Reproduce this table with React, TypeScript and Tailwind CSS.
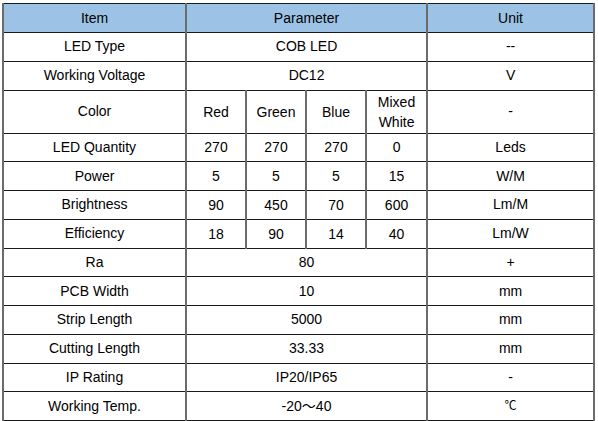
import React from "react";

type Row = { item: string; cells: string[]; unit: string; tall?: boolean };

const rows: Row[] = [
  { item: "LED Type", cells: ["COB LED"], unit: "--" },
  { item: "Working Voltage", cells: ["DC12"], unit: "V" },
  { item: "Color", cells: ["Red", "Green", "Blue", "Mixed White"], unit: "-", tall: true },
  { item: "LED Quantity", cells: ["270", "270", "270", "0"], unit: "Leds" },
  { item: "Power", cells: ["5", "5", "5", "15"], unit: "W/M" },
  { item: "Brightness", cells: ["90", "450", "70", "600"], unit: "Lm/M" },
  { item: "Efficiency", cells: ["18", "90", "14", "40"], unit: "Lm/W" },
  { item: "Ra", cells: ["80"], unit: "+" },
  { item: "PCB Width", cells: ["10"], unit: "mm" },
  { item: "Strip Length", cells: ["5000"], unit: "mm" },
  { item: "Cutting Length", cells: ["33.33"], unit: "mm" },
  { item: "IP Rating", cells: ["IP20/IP65"], unit: "-" },
  { item: "Working Temp.", cells: ["-20～40"], unit: "℃" },
];

const cell =
  "border-x-2 border-x-[#6b6b6b] border-y border-y-[#1a1a1a] text-center align-middle p-0";

export default function App() {
  return (
    <div
      className="min-h-screen bg-white pl-[2px] pt-[3px] text-[14px] text-black"
      style={{ fontFamily: '"Liberation Sans", Arial, "Noto Sans CJK SC", sans-serif' }}
    >
      <table className="w-[591px] table-fixed border-collapse">
        <colgroup>
          <col className="w-[183px]" />
          <col className="w-[60px]" />
          <col className="w-[60px]" />
          <col className="w-[60px]" />
          <col className="w-[61px]" />
          <col className="w-[167px]" />
        </colgroup>
        <thead>
          <tr className="h-[29px] bg-[#9cc2e5]">
            <th className={`${cell} font-normal`}>Item</th>
            <th className={`${cell} font-normal`} colSpan={4}>
              Parameter
            </th>
            <th className={`${cell} font-normal`}>Unit</th>
          </tr>
        </thead>
        <tbody>
          {rows.map((r) => (
            <tr key={r.item} className={r.tall ? "h-[43px]" : "h-[28.75px]"}>
              <td className={cell}>{r.item}</td>
              {r.cells.length === 1 ? (
                <td className={cell} colSpan={4}>
                  {r.cells[0]}
                </td>
              ) : (
                r.cells.map((c, i) => (
                  <td key={i} className={`${cell} leading-[20px]`}>
                    {c}
                  </td>
                ))
              )}
              <td className={r.unit === "℃" ? `${cell} text-[12px]` : cell}>{r.unit}</td>
            </tr>
          ))}
        </tbody>
      </table>
    </div>
  );
}
